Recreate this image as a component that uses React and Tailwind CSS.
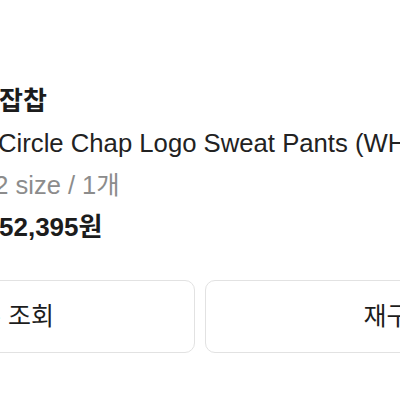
import React from "react";

const font = { fontFamily: '"Liberation Sans", "Noto Sans CJK KR", sans-serif' };

const OrderItem = () => {
    return (
        <div className="pt-[80px]">
            <p className="-ml-[1px] text-[26px] leading-[42px] font-bold text-[#1c1c1c]">
                잡찹
            </p>
            <p className="-ml-[2px] whitespace-nowrap text-[25.7px] leading-[42px] text-[#222]">
                Circle Chap Logo Sweat Pants (WHITE)
            </p>
            <p className="-ml-[27px] whitespace-nowrap text-[25.5px] leading-[42px] text-[#8c8c8c]">
                M2 size / 1개
            </p>
            <p className="-ml-[1px] text-[26px] leading-[42px] font-bold text-[#1c1c1c]">
                52,395원
            </p>
        </div>
    );
};

const ActionButtons = () => {
    return (
        <div className="mt-[32px] -ml-[163px] flex gap-[10px]">
            <button className="w-[358px] h-[73px] shrink-0 flex items-center justify-center rounded-[10px] border border-[#e2e2e2] bg-white text-[25px] text-[#1c1c1c]">
                수 조회
            </button>
            <button className="w-[386px] h-[73px] shrink-0 flex items-center justify-center rounded-[10px] border border-[#e2e2e2] bg-white text-[25px] text-[#1c1c1c]">
                재구매
            </button>
        </div>
    );
};

export default function App() {
    return (
        <div className="w-[400px] h-[400px] overflow-hidden bg-white" style={font}>
            <OrderItem />
            <ActionButtons />
        </div>
    );
}
